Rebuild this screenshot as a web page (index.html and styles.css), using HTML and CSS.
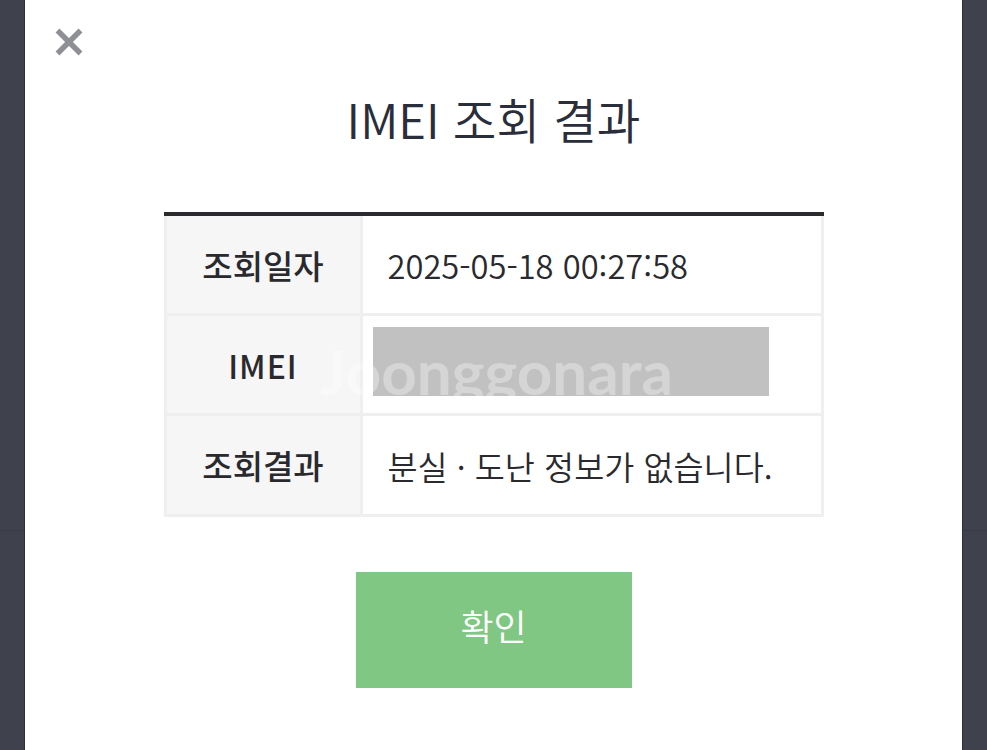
FILE: index.html
```html
<!DOCTYPE html>
<html lang="ko">
<head>
<meta charset="utf-8">
<title>IMEI 조회 결과</title>
<link rel="stylesheet" href="styles.css">
</head>
<body>
<div class="backdrop">
  <span class="backdrop-line"></span>
  <main class="modal">
    <button class="close" aria-label="닫기">
      <svg viewBox="0 0 28 28" width="28" height="28"><path d="M2.5 2.5 25.5 25.5M25.5 2.5 2.5 25.5" stroke="#8f9095" stroke-width="5.4" fill="none"/></svg>
    </button>
    <h1 class="title">IMEI 조회 결과</h1>
    <div class="result">
      <div class="row">
        <div class="label">조회일자</div>
        <div class="value">2025-05-18 00:27:58</div>
      </div>
      <div class="row">
        <div class="label label-latin">IMEI</div>
        <div class="value value-masked"><span class="mask"></span></div>
      </div>
      <div class="row row-last">
        <div class="label">조회결과</div>
        <div class="value">분실 · 도난 정보가 없습니다.</div>
      </div>
    </div>
    <button class="confirm">확인</button>
    <span class="watermark">Joonggonara</span>
  </main>
</div>
</body>
</html>
```
FILE: styles.css
```css
* { box-sizing: border-box; }
html, body { margin: 0; height: 100%; overflow: hidden; }
body { font-family: "Noto Sans CJK KR", "Noto Sans", sans-serif; color: #26282f; }
.backdrop { position: relative; height: 750px; background: #3f424d; padding: 0 25px; }
.backdrop-line { position: absolute; left: 0; right: 0; top: 530px; height: 1px; background: #383c46; }
.modal { position: relative; width: 937px; height: 750px; background: #fff; display: flex; flex-direction: column; align-items: center; box-shadow: 0 0 0 1px #2e3039; }
.close { position: absolute; left: 30px; top: 28px; width: 28px; height: 28px; padding: 0; border: 0; background: none; display: block; }
.close svg { display: block; }
.title { margin: 85px 0 0; height: 67px; font-size: 47.4px; line-height: 67px; font-weight: 350; color: #2a2d3a; letter-spacing: 0; white-space: nowrap; }
.result { width: 660px; margin-top: 60px; border-top: 4px solid #2b2b2e; }
.row { display: grid; grid-template-columns: 196px 1fr; height: 100px; border: 3px solid #efefef; border-top: 0; }
.row-last { height: 101px; }
.label { display: flex; align-items: center; justify-content: center; background: #f6f6f6; border-right: 3px solid #efefef; font-size: 33px; font-weight: 500; color: #2a2a2e; }
.label-latin { letter-spacing: 1px; font-size: 32px; }
.value { display: flex; align-items: center; padding-left: 25px; font-size: 32.7px; font-weight: 350; color: #2a2a2e; white-space: nowrap; }
.value-masked { padding: 11px 0 0 10px; align-items: flex-start; }
.mask { width: 396px; height: 69px; background: #c1c1c1; }
.confirm { width: 276px; height: 116px; margin-top: 55px; padding: 0 0 10px; border: 0; border-radius: 0; background: #81c784; color: #fff; font-family: inherit; font-size: 36px; font-weight: 350; }
.watermark { position: absolute; left: 295px; top: 333px; font-family: "Lato", sans-serif; font-weight: 700; font-size: 62px; line-height: 76px; color: rgba(255,255,255,0.32); letter-spacing: 0; pointer-events: none; }
```
